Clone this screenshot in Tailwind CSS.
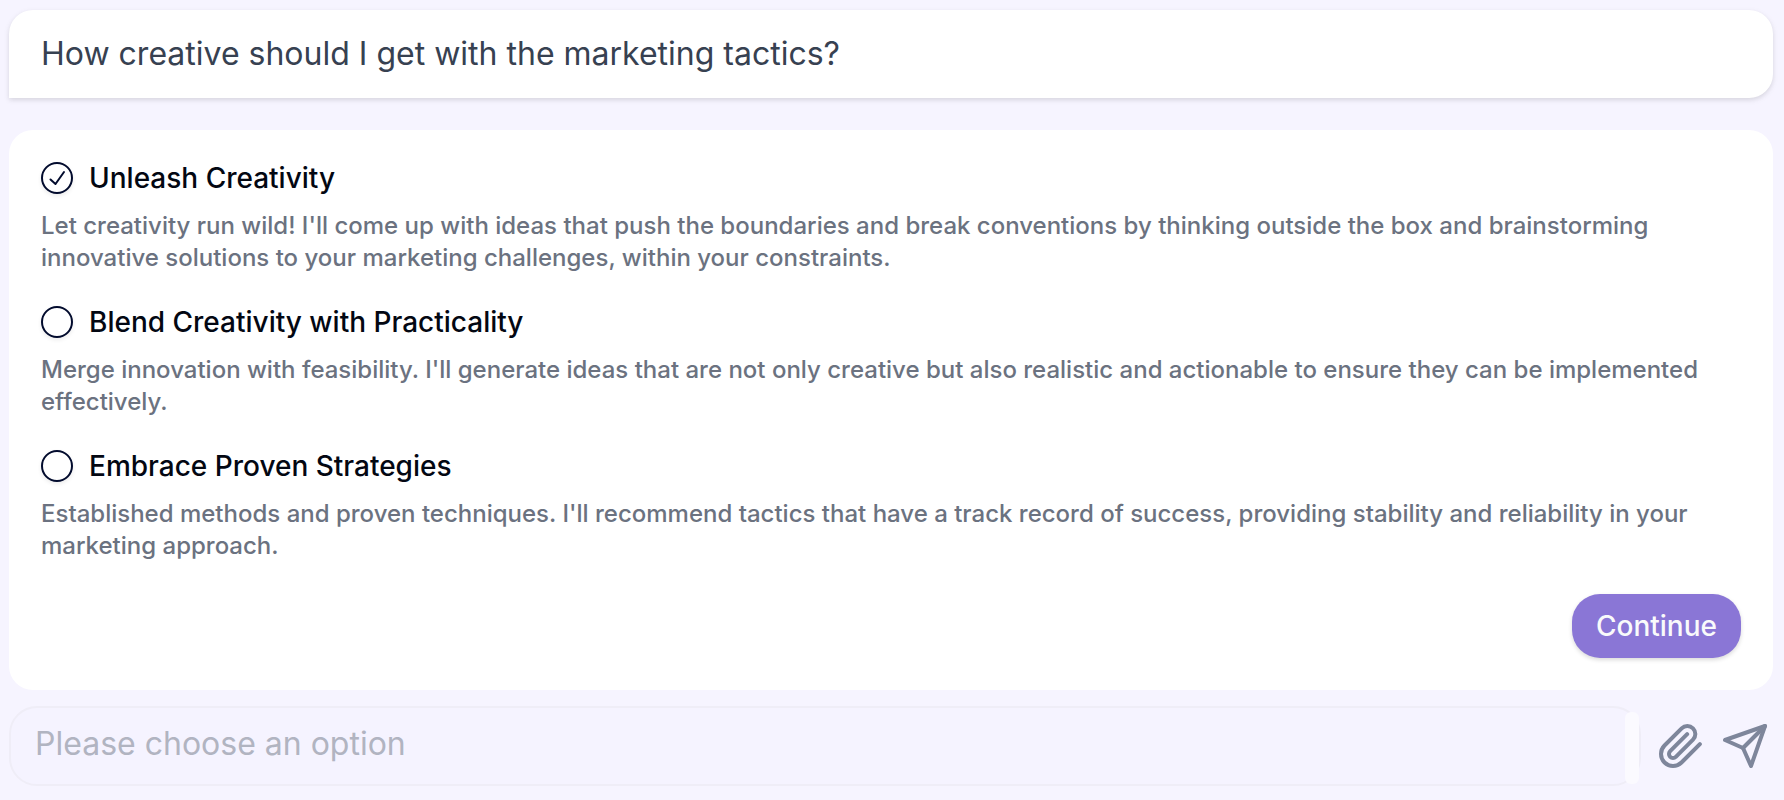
<!DOCTYPE html>
<html lang="en">
<head>
    <meta charset="UTF-8">
    <meta name="viewport" content="width=device-width, initial-scale=1.0">
    <title>Marketing Tactics</title>
    <script src="https://cdn.jsdelivr.net/npm/@tailwindcss/browser@4"></script>
</head>
<body class="bg-[#f6f4ff] min-h-screen font-[Inter,sans-serif]">
    <main class="pt-[10px] pl-[9px] pr-[11px] pb-3">
        <!-- Question -->
        <div class="bg-white rounded-3xl rounded-bl-none px-8 py-6 shadow-[0_2px_6px_rgba(0,0,0,0.08),0_2px_4px_rgba(0,0,0,0.06)]">
            <h1 class="text-[32px] leading-10 text-[#374151]">How creative should I get with the marketing tactics?</h1>
        </div>

        <!-- Options -->
        <form id="optionsForm" class="bg-white rounded-3xl p-8 mt-8">
            <div class="flex flex-col gap-8">
                <div>
                    <div class="flex items-center gap-4">
                        <span class="grid size-8 shrink-0">
                            <input type="radio" id="unleash" name="creativity" value="unleash" checked aria-describedby="unleashText"
                                class="peer col-start-1 row-start-1 appearance-none size-8 rounded-full border-2 border-[#020b2d] shadow-[0_2px_4px_rgba(0,0,0,0.08)]">
                            <svg class="col-start-1 row-start-1 size-8 pointer-events-none opacity-0 peer-checked:opacity-100" viewBox="0 0 32 32" fill="none" stroke="#020b2d" stroke-width="2" stroke-linecap="round" stroke-linejoin="round">
                                <path d="M9.5 17.5L14.5 22L23 10"/>
                            </svg>
                        </span>
                        <label for="unleash" class="text-[28px] leading-8 font-medium text-gray-950">Unleash Creativity</label>
                    </div>
                    <p id="unleashText" class="mt-4 text-2xl leading-8 font-medium text-[#6b7280]">Let creativity run wild! I'll come up with ideas that push the boundaries and break conventions by thinking outside the box and brainstorming innovative solutions to your marketing challenges, within your constraints.</p>
                </div>

                <div>
                    <div class="flex items-center gap-4">
                        <span class="grid size-8 shrink-0">
                            <input type="radio" id="blend" name="creativity" value="blend" aria-describedby="blendText"
                                class="peer col-start-1 row-start-1 appearance-none size-8 rounded-full border-2 border-[#020b2d] shadow-[0_2px_4px_rgba(0,0,0,0.08)]">
                            <svg class="col-start-1 row-start-1 size-8 pointer-events-none opacity-0 peer-checked:opacity-100" viewBox="0 0 32 32" fill="none" stroke="#020b2d" stroke-width="2" stroke-linecap="round" stroke-linejoin="round">
                                <path d="M9.5 17.5L14.5 22L23 10"/>
                            </svg>
                        </span>
                        <label for="blend" class="text-[28px] leading-8 font-medium text-gray-950">Blend Creativity with Practicality</label>
                    </div>
                    <p id="blendText" class="mt-4 text-2xl leading-8 font-medium text-[#6b7280]">Merge innovation with feasibility. I'll generate ideas that are not only creative but also realistic and actionable to ensure they can be implemented effectively.</p>
                </div>

                <div>
                    <div class="flex items-center gap-4">
                        <span class="grid size-8 shrink-0">
                            <input type="radio" id="proven" name="creativity" value="proven" aria-describedby="provenText"
                                class="peer col-start-1 row-start-1 appearance-none size-8 rounded-full border-2 border-[#020b2d] shadow-[0_2px_4px_rgba(0,0,0,0.08)]">
                            <svg class="col-start-1 row-start-1 size-8 pointer-events-none opacity-0 peer-checked:opacity-100" viewBox="0 0 32 32" fill="none" stroke="#020b2d" stroke-width="2" stroke-linecap="round" stroke-linejoin="round">
                                <path d="M9.5 17.5L14.5 22L23 10"/>
                            </svg>
                        </span>
                        <label for="proven" class="text-[28px] leading-8 font-medium text-gray-950">Embrace Proven Strategies</label>
                    </div>
                    <p id="provenText" class="mt-4 text-2xl leading-8 font-medium text-[#6b7280]">Established methods and proven techniques. I'll recommend tactics that have a track record of success, providing stability and reliability in your marketing approach.</p>
                </div>
            </div>
            <div class="flex justify-end mt-8">
                <button type="submit" class="h-16 px-6 rounded-[28px] bg-[#8a76d6] text-[28px] leading-10 font-medium text-gray-50 shadow-[0_2px_4px_rgba(0,0,0,0.15)]">Continue</button>
            </div>
        </form>

        <!-- Message bar -->
        <div class="flex items-center gap-4 mt-4 pr-1">
            <div class="relative flex-1">
                <textarea rows="1" disabled aria-label="Message" placeholder="Please choose an option"
                    class="block w-full h-20 px-6 py-4 resize-none overflow-hidden rounded-[28px] border-2 border-[#efedf7] bg-[#f5f3ff] text-[32px] leading-10 placeholder:text-[#b1b4c1]"></textarea>
                <!-- scroll thumb -->
                <div class="absolute top-[6px] right-[2px] bottom-[2px] w-[14px] rounded-md bg-[#fbfaff]"></div>
            </div>
            <button type="button" aria-label="Attach file" class="text-[#7e869b]">
                <svg class="size-12" viewBox="0 0 24 24" fill="none" stroke="currentColor" stroke-width="2" stroke-linecap="round" stroke-linejoin="round">
                    <path d="m21.44 11.05-9.19 9.19a6 6 0 0 1-8.49-8.49l8.57-8.57A4 4 0 1 1 18 8.84l-8.59 8.57a2 2 0 0 1-2.83-2.83l8.49-8.48"/>
                </svg>
            </button>
            <button type="button" aria-label="Send" class="text-[#7e869b]">
                <svg class="size-12" viewBox="0 0 24 24" fill="none" stroke="currentColor" stroke-width="2" stroke-linecap="round" stroke-linejoin="round">
                    <path d="m22 2-7 20-4-9-9-4Z"/>
                    <path d="M22 2 11 13"/>
                </svg>
            </button>
        </div>
    </main>
</body>
</html>
